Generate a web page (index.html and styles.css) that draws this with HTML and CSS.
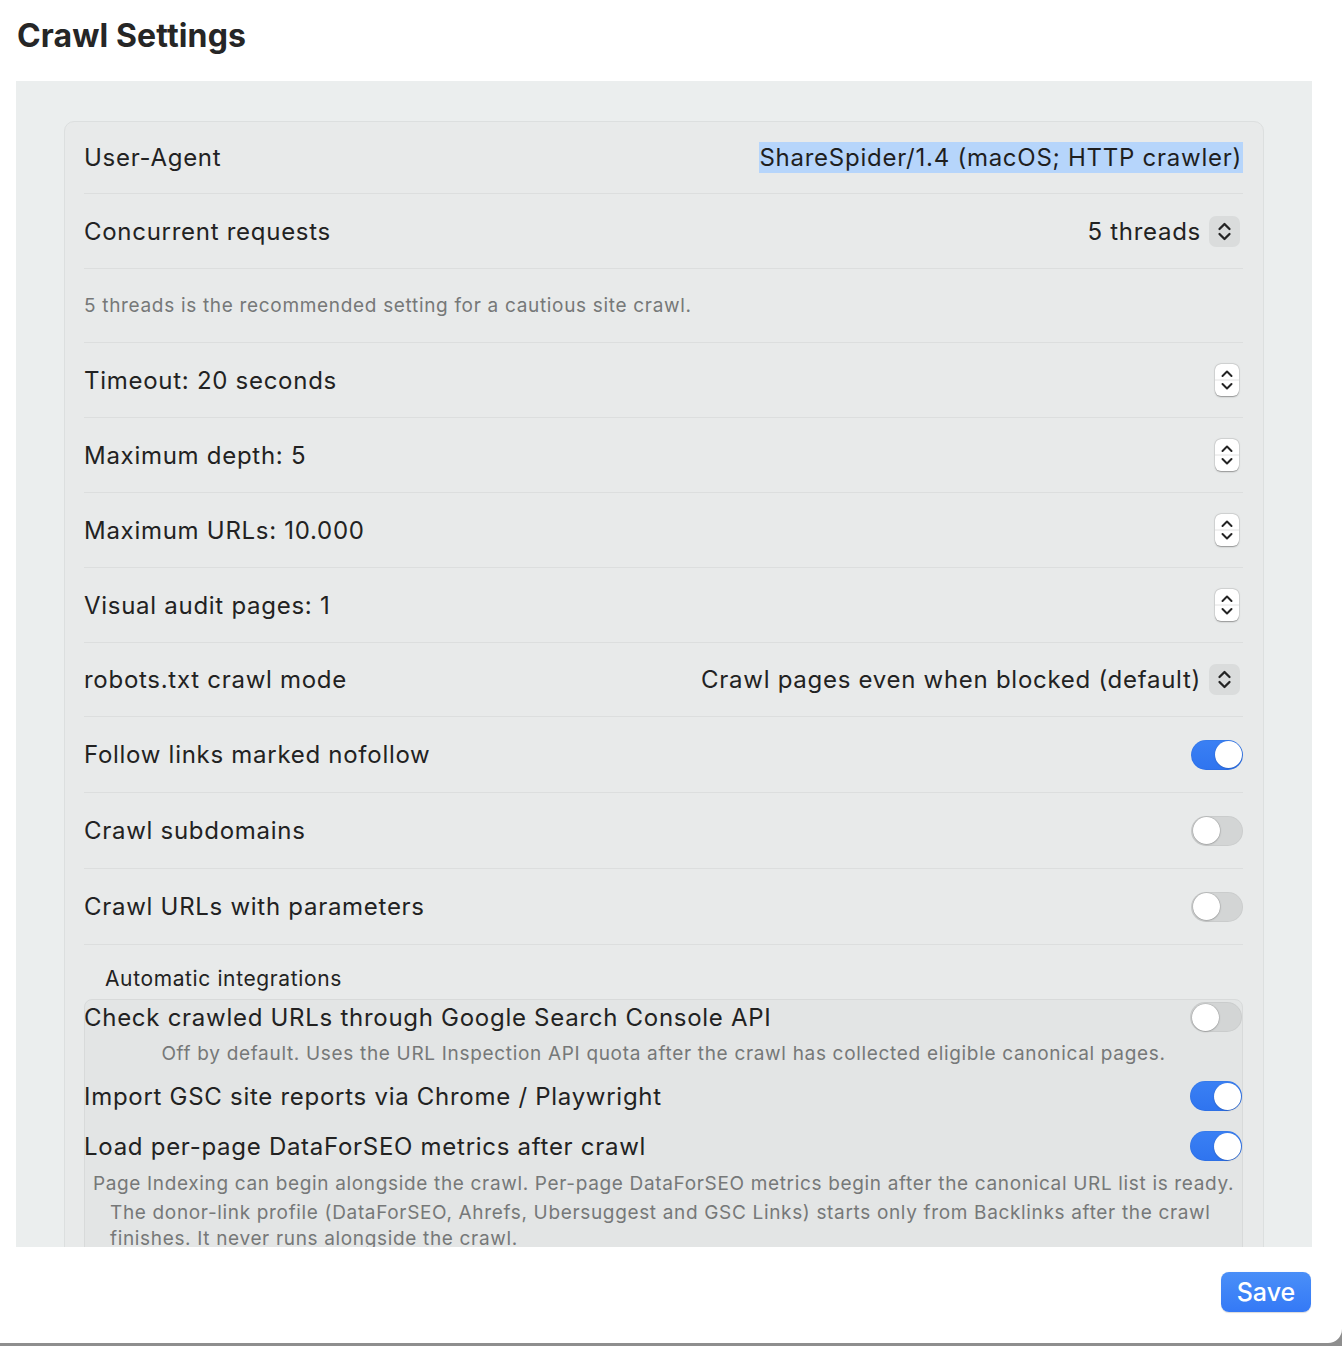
FILE: index.html
```html
<!DOCTYPE html>
<html lang="en">
<head>
<meta charset="utf-8">
<title>Crawl Settings</title>
<link rel="stylesheet" href="styles.css">
</head>
<body>
<div class="window">
  <h1 class="title">Crawl Settings</h1>
  <div class="panel">
    <div class="card">
      <div class="row first">
        <span class="label">User-Agent</span>
        <span class="ua">ShareSpider/1.4 (macOS; HTTP crawler)</span>
      </div>
      <div class="row">
        <span class="label">Concurrent requests</span>
        <span class="popup">5 threads
          <span class="popup-btn"><svg width="31" height="31" viewBox="0 0 31 31"><path d="M10.5 13 L15.5 8 L20.5 13 M10.5 18 L15.5 23 L20.5 18" fill="none" stroke="#242424" stroke-width="2.3" stroke-linecap="round" stroke-linejoin="round"/></svg></span>
        </span>
      </div>
      <div class="row hint-row">
        <span class="hint">5 threads is the recommended setting for a cautious site crawl.</span>
      </div>
      <div class="row">
        <span class="label">Timeout: 20 seconds</span>
        <span class="stepper"><svg width="24" height="32" viewBox="0 0 24 32"><path d="M7.5 12 L12 7.5 L16.5 12 M7.5 20 L12 24.5 L16.5 20" fill="none" stroke="#242424" stroke-width="2" stroke-linecap="round" stroke-linejoin="round"/><line x1="0" y1="16" x2="24" y2="16" stroke="#e2e2e2" stroke-width="1"/></svg></span>
      </div>
      <div class="row">
        <span class="label">Maximum depth: 5</span>
        <span class="stepper"><svg width="24" height="32" viewBox="0 0 24 32"><path d="M7.5 12 L12 7.5 L16.5 12 M7.5 20 L12 24.5 L16.5 20" fill="none" stroke="#242424" stroke-width="2" stroke-linecap="round" stroke-linejoin="round"/><line x1="0" y1="16" x2="24" y2="16" stroke="#e2e2e2" stroke-width="1"/></svg></span>
      </div>
      <div class="row">
        <span class="label">Maximum URLs: 10.000</span>
        <span class="stepper"><svg width="24" height="32" viewBox="0 0 24 32"><path d="M7.5 12 L12 7.5 L16.5 12 M7.5 20 L12 24.5 L16.5 20" fill="none" stroke="#242424" stroke-width="2" stroke-linecap="round" stroke-linejoin="round"/><line x1="0" y1="16" x2="24" y2="16" stroke="#e2e2e2" stroke-width="1"/></svg></span>
      </div>
      <div class="row">
        <span class="label">Visual audit pages: 1</span>
        <span class="stepper"><svg width="24" height="32" viewBox="0 0 24 32"><path d="M7.5 12 L12 7.5 L16.5 12 M7.5 20 L12 24.5 L16.5 20" fill="none" stroke="#242424" stroke-width="2" stroke-linecap="round" stroke-linejoin="round"/><line x1="0" y1="16" x2="24" y2="16" stroke="#e2e2e2" stroke-width="1"/></svg></span>
      </div>
      <div class="row row-short">
        <span class="label">robots.txt crawl mode</span>
        <span class="popup">Crawl pages even when blocked (default)
          <span class="popup-btn"><svg width="31" height="31" viewBox="0 0 31 31"><path d="M10.5 13 L15.5 8 L20.5 13 M10.5 18 L15.5 23 L20.5 18" fill="none" stroke="#242424" stroke-width="2.3" stroke-linecap="round" stroke-linejoin="round"/></svg></span>
        </span>
      </div>
      <div class="row row-tall">
        <span class="label">Follow links marked nofollow</span>
        <span class="toggle on"><span class="knob"></span></span>
      </div>
      <div class="row row-tall">
        <span class="label">Crawl subdomains</span>
        <span class="toggle"><span class="knob"></span></span>
      </div>
      <div class="row row-tall">
        <span class="label">Crawl URLs with parameters</span>
        <span class="toggle"><span class="knob"></span></span>
      </div>

      <div class="section-label">Automatic integrations</div>
      <div class="group">
        <div class="g-row">
          <span class="label">Check crawled URLs through Google Search Console API</span>
          <span class="toggle"><span class="knob"></span></span>
        </div>
        <p class="g-hint">Off by default. Uses the URL Inspection API quota after the crawl has collected eligible canonical pages.</p>
        <div class="g-row g-import">
          <span class="label">Import GSC site reports via Chrome / Playwright</span>
          <span class="toggle on"><span class="knob"></span></span>
        </div>
        <div class="g-row g-load">
          <span class="label">Load per-page DataForSEO metrics after crawl</span>
          <span class="toggle on"><span class="knob"></span></span>
        </div>
        <p class="g-note">Page Indexing can begin alongside the crawl. Per-page DataForSEO metrics begin after the canonical URL list is ready.</p>
        <p class="g-note2">The donor-link profile (DataForSEO, Ahrefs, Ubersuggest and GSC Links) starts only from Backlinks after the crawl<br>finishes. It never runs alongside the crawl.</p>
      </div>
    </div>
  </div>
  <div class="footer">
    <button class="save" type="button">Save</button>
  </div>
</div>
</body>
</html>
```

FILE: styles.css
```css
* { box-sizing: border-box; }

html, body {
  margin: 0;
  padding: 0;
}

body {
  background: #8e8e8e;
  font-family: Inter, "Noto Sans", "Liberation Sans", sans-serif;
  color: #222222;
  height: 1346px;
  overflow: hidden;
}

.window {
  width: 1342px;
  height: 1343px;
  background: #ffffff;
  border-bottom-right-radius: 14px;
  overflow: hidden;
}

.title {
  margin: 0;
  height: 70px;
  line-height: 72px;
  padding-left: 17px;
  font-size: 32px;
  font-weight: 700;
  letter-spacing: 0.12px;
  color: #262626;
}

.panel {
  margin: 11px 30px 0 16px;
  height: 1166px;
  overflow: hidden;
  background: #ebeeee;
  padding: 40px 48px 0;
}

.card {
  background: #e8eaea;
  border: 1px solid #dcdfdf;
  border-radius: 10px;
  padding: 0 20px 40px 19px;
}

.row {
  height: 75px;
  display: flex;
  align-items: center;
  justify-content: space-between;
  border-bottom: 1px solid #dcdede;
}

.row.first { height: 72px; }
.row.hint-row { height: 74px; }
.row.row-short { height: 74px; }
.row.row-tall { height: 76px; }

.label {
  font-size: 24px;
  color: #222222;
  letter-spacing: 0.72px;
  white-space: nowrap;
}

.ua {
  font-size: 24px;
  color: #1f1f1f;
  background: #b6d5fb;
  line-height: 31px;
  padding: 0 1px 0 0;
  letter-spacing: 0.74px;
  white-space: nowrap;
}

.popup {
  display: flex;
  align-items: center;
  font-size: 24px;
  color: #222222;
  letter-spacing: 0.72px;
  margin-right: 3px;
}

.popup-btn {
  display: block;
  width: 31px;
  height: 31px;
  margin-left: 8px;
  background: #dadcdc;
  border-radius: 7px;
}

.popup-btn svg { display: block; }

.stepper {
  display: block;
  width: 24px;
  height: 32px;
  margin-right: 4px;
  background: #ffffff;
  border-radius: 6px;
  box-shadow: 0 0.5px 1.5px rgba(0, 0, 0, 0.35), 0 0 0 0.5px rgba(0, 0, 0, 0.08);
  overflow: hidden;
}

.stepper svg { display: block; }

.hint-row {
  justify-content: flex-start;
}

.hint {
  font-size: 19px;
  color: #767878;
  letter-spacing: 0.68px;
}

.toggle {
  position: relative;
  display: block;
  width: 52px;
  height: 30px;
  border-radius: 15px;
  background: #d3d5d5;
  box-shadow: inset 0 0 0 1px rgba(0, 0, 0, 0.04);
  flex-shrink: 0;
}

.toggle .knob {
  position: absolute;
  top: 1.5px;
  left: 1.5px;
  width: 27px;
  height: 27px;
  border-radius: 50%;
  background: #ffffff;
  box-shadow: 0 0.5px 2px rgba(0, 0, 0, 0.3), 0 0 0 0.5px rgba(0, 0, 0, 0.1);
}

.toggle.on {
  background: linear-gradient(#3a80f4, #2f74ef);
}

.toggle.on .knob {
  left: 23.5px;
  box-shadow: 0 0.5px 1.5px rgba(0, 0, 0, 0.25);
}

.section-label {
  font-size: 21px;
  color: #222222;
  line-height: 28px;
  padding: 20px 0 0 21px;
  margin-bottom: 6px;
  letter-spacing: 0.62px;
}

.group {
  background: #e3e5e5;
  border: 1px solid #d8dada;
  border-radius: 8px;
  padding: 0 0 10px;
}

.g-row {
  height: 34px;
  display: flex;
  align-items: center;
  justify-content: space-between;
}

.group .label { margin-left: -1px; }

.g-hint {
  margin: 7px 0 0;
  line-height: 26px;
  font-size: 19px;
  color: #767878;
  text-align: center;
  letter-spacing: 0.68px;
}

.g-import { margin-top: 12px; }

.g-load { margin-top: 16px; }

.g-note {
  margin: 7px 0 0;
  font-size: 19px;
  line-height: 28px;
  color: #767878;
  text-align: center;
  letter-spacing: 0.66px;
  white-space: nowrap;
}

.g-note2 {
  margin: 2px 0 0;
  padding-left: 25px;
  font-size: 19px;
  line-height: 26px;
  color: #767878;
  letter-spacing: 0.66px;
  white-space: nowrap;
}

.footer {
  display: flex;
  justify-content: flex-end;
  padding: 25px 31px 0 0;
}

.save {
  width: 90px;
  height: 40px;
  border: none;
  border-radius: 8px;
  background: linear-gradient(#4a8ff8, #3479f6);
  color: #ffffff;
  font-family: Inter, "Noto Sans", "Liberation Sans", sans-serif;
  font-size: 25px;
  font-weight: 500;
  padding: 0;
  box-shadow: 0 0.5px 1px rgba(0, 0, 0, 0.15);
}
```
